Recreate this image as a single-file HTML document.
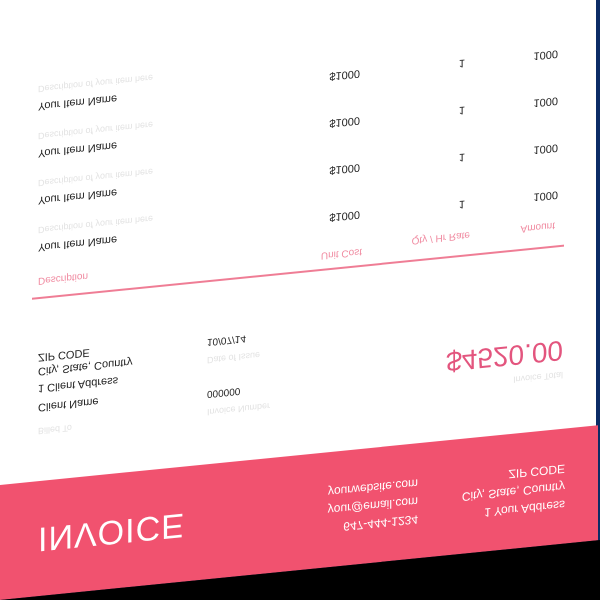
<!DOCTYPE html>
<html><head><style>
html,body{margin:0;padding:0;width:600px;height:600px;overflow:hidden}
body{background:#0c2c66;position:relative;font-family:"Liberation Sans",sans-serif}
#clip{position:absolute;left:0;top:0;width:600px;height:600px;overflow:hidden;background:#0c2c66}
#w{position:absolute;left:0;top:0;width:600px;height:600px;transform:skewY(-5.7deg);transform-origin:300px 300px}
.pg{position:absolute;left:-10px;top:-40px;width:606px;height:500px;background:#fff}
.band{position:absolute;left:-10px;top:455px;width:608px;height:115px;background:#f1526f}
.blk{position:absolute;left:-10px;top:570px;width:620px;height:80px;background:#000}
.t{position:absolute;transform:scaleY(-1);white-space:nowrap;line-height:1;color:#222}
.r{text-align:right}
.f{color:#e2e2e2}
.p{color:#f08aa0}
.wt{color:#fff}
.line{position:absolute;left:32px;top:271px;width:532px;height:2px;background:#ef7d95}
</style></head><body>
<div id="clip">
<div id="w">
<div class="pg"></div>
<div class="band"></div>
<div class="blk"></div>

<div class="t wt" style="left:38px;top:496px;font-size:34px;letter-spacing:1px">INVOICE</div>
<div class="t wt r" style="right:35px;top:489px;font-size:12px">ZIP CODE</div>
<div class="t wt r" style="right:35px;top:507px;font-size:12px">City, State, Country</div>
<div class="t wt r" style="right:35px;top:525px;font-size:12px">1 Your Address</div>
<div class="t wt r" style="right:182px;top:489px;font-size:12px">yourwebsite.com</div>
<div class="t wt r" style="right:182px;top:507px;font-size:12px">your@email.com</div>
<div class="t wt r" style="right:182px;top:525px;font-size:12px">647-444-1234</div>

<div class="t r" style="right:37px;top:362px;font-size:28px;color:#e3557e">$4520.00</div>
<div class="t f r" style="right:37px;top:396px;font-size:9px">Invoice Total</div>

<div class="t" style="left:38px;top:325px;font-size:11px">ZIP CODE</div>
<div class="t" style="left:38px;top:339px;font-size:11px">City, State, Country</div>
<div class="t" style="left:38px;top:356px;font-size:11px">1 Client Address</div>
<div class="t" style="left:38px;top:375px;font-size:11px">Client Name</div>
<div class="t f" style="left:38px;top:400px;font-size:9px">Billed To</div>
<div class="t" style="left:207px;top:327px;font-size:10px">10/07/14</div>
<div class="t f" style="left:207px;top:346px;font-size:9px">Date of Issue</div>
<div class="t" style="left:207px;top:379px;font-size:10px">000000</div>
<div class="t f" style="left:207px;top:398px;font-size:9px">Invoice Number</div>

<div class="line"></div>
<div class="t p" style="left:38px;top:249px;font-size:10px">Description</div>
<div class="t p r" style="right:238px;top:252px;font-size:10px">Unit Cost</div>
<div class="t p r" style="right:130px;top:246px;font-size:10px">Qty / Hr Rate</div>
<div class="t p r" style="right:45px;top:245px;font-size:10px">Amount</div>

<div class="t" style="left:38px;top:215px;font-size:11px">Your Item Name</div>
<div class="t f" style="left:38px;top:199px;font-size:9px">Description of your item here</div>
<div class="t r" style="right:240px;top:214px;font-size:11px">$1000</div>
<div class="t r" style="right:135px;top:214px;font-size:11px">1</div>
<div class="t r" style="right:42px;top:214px;font-size:11px">1000</div>

<div class="t" style="left:38px;top:168px;font-size:11px">Your Item Name</div>
<div class="t f" style="left:38px;top:152px;font-size:9px">Description of your item here</div>
<div class="t r" style="right:240px;top:167px;font-size:11px">$1000</div>
<div class="t r" style="right:135px;top:167px;font-size:11px">1</div>
<div class="t r" style="right:42px;top:167px;font-size:11px">1000</div>

<div class="t" style="left:38px;top:121px;font-size:11px">Your Item Name</div>
<div class="t f" style="left:38px;top:105px;font-size:9px">Description of your item here</div>
<div class="t r" style="right:240px;top:120px;font-size:11px">$1000</div>
<div class="t r" style="right:135px;top:120px;font-size:11px">1</div>
<div class="t r" style="right:42px;top:120px;font-size:11px">1000</div>

<div class="t" style="left:38px;top:74px;font-size:11px">Your Item Name</div>
<div class="t f" style="left:38px;top:58px;font-size:9px">Description of your item here</div>
<div class="t r" style="right:240px;top:73px;font-size:11px">$1000</div>
<div class="t r" style="right:135px;top:73px;font-size:11px">1</div>
<div class="t r" style="right:42px;top:73px;font-size:11px">1000</div>
</div>
</div>
</body></html>
